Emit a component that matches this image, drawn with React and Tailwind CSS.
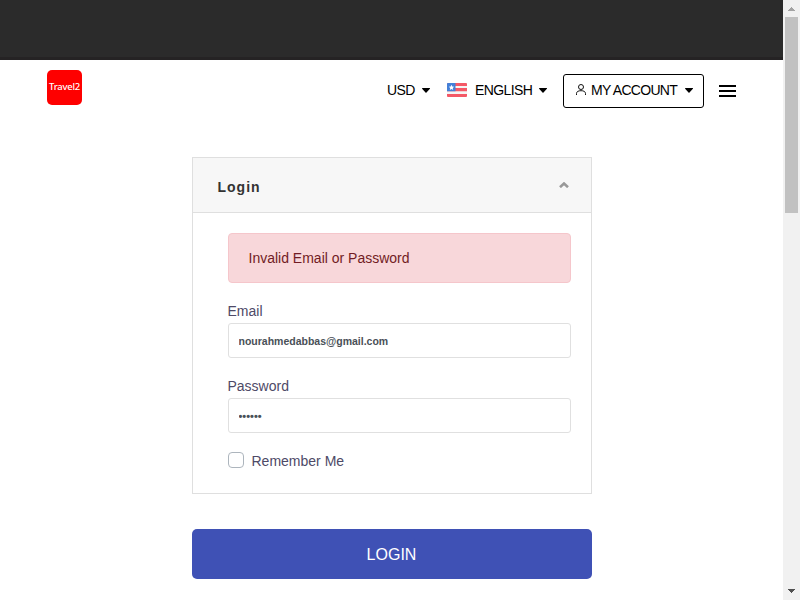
function Caret() {
  return (
    <svg className="block h-[5px] w-[8px] shrink-0" viewBox="0 0 8 5">
      <path d="M0 0.5C0 0.2 0.2 0 0.5 0h7c.5 0 .7.5.4.8L4.5 4.6a.7.7 0 0 1-1 0L.1.8z" fill="#000" />
    </svg>
  );
}

function Flag() {
  return (
    <svg className="-mt-[1px] block h-[14px] w-[20px] shrink-0" viewBox="0 0 20 14">
      <rect width="20" height="14" rx="1" fill="#f5f5f5" />
      <path d="M1 0h18a1 1 0 0 1 1 1v2H0V1a1 1 0 0 1 1-1zM0 5h20v3.200H0zM0 11h20v2a1 1 0 0 1-1 1H1a1 1 0 0 1-1-1z" fill="#f45866" />
      <path d="M1 0h7.500v8.300H0V1a1 1 0 0 1 1-1z" fill="#4480d8" />
      <path d="M4.500 1.800l.8 1.700 1.900.2-1.400 1.300.4 1.900-1.700-.9-1.700.9.400-1.900-1.400-1.300 1.900-.2z" fill="#fff" />
    </svg>
  );
}

function Header() {
  return (
    <header className="flex h-[61px] items-center pl-[47px] pr-[47px] text-[14px] tracking-[-0.6px] text-black">
      <div className="-mt-[6px] flex h-[35px] w-[35px] items-center justify-center rounded-[5px] bg-[#fe0000] font-['Noto_Sans',sans-serif] text-[9.5px] font-medium tracking-[-0.25px] text-white">
        Travel2
      </div>
      <div className="ml-auto flex items-center">
        <span className="w-[35px]">USD</span>
        <Caret />
        <div className="ml-[17px] flex items-center">
          <Flag />
          <span className="ml-[8px] w-[64px]">ENGLISH</span>
          <Caret />
        </div>
        <button className="ml-[16px] flex h-[34px] w-[141px] items-center rounded-[3px] border border-black pl-[12px]">
          <svg className="-mt-[3px] block h-[11px] w-[10px]" viewBox="0 0 10 11" fill="none" stroke="#111" strokeWidth="1">
            <circle cx="5" cy="3" r="2.500" />
            <path d="M.5 11V9.500C.5 7.500 2.500 6.700 5 6.700s4.500.8 4.500 2.800V11" />
          </svg>
          <span className="ml-[5px] w-[94px] text-left tracking-[-0.7px]">MY ACCOUNT</span>
          <Caret />
        </button>
        <div className="ml-[15px] flex w-[17px] flex-col gap-[3px]">
          <span className="h-[2px] bg-black" />
          <span className="h-[2px] bg-black" />
          <span className="h-[2px] bg-black" />
        </div>
      </div>
    </header>
  );
}

function Field({ label, type, value, size }) {
  return (
    <label className="block h-[75px]">
      <span className="-ml-[0.5px] block h-[20px] text-[14px] leading-[16px]">{label}</span>
      <input
        type={type}
        defaultValue={value}
        className={`block h-[35px] w-full rounded-[3px] border border-[#e0e0e0] bg-white pl-[9.5px] pr-[10px] font-bold text-[#495057] outline-none ${size}`}
      />
    </label>
  );
}

function LoginForm() {
  return (
    <form className="ml-[192px] mt-[36px] w-[400px]">
      <section className="h-[337px] border border-[#dfdfdf]">
        <div className="flex h-[55px] items-center border-b border-[#dfdfdf] bg-[#f7f7f7] pl-[24.5px] pr-[22px]">
          <h3 className="mt-[4px] text-[14px] font-bold tracking-[1px] text-[#333]">Login</h3>
          <svg className="ml-auto block h-[6px] w-[10px]" viewBox="0 0 10 6" fill="none" stroke="#999" strokeWidth="2.600">
            <path d="M1 5.200l4-3.700 4 3.700" />
          </svg>
        </div>
        <div className="pl-[35px] pr-[20px] pt-[20px] text-[#4e4a67]">
          <div className="mb-[20px] flex h-[50px] items-center rounded-[4px] border border-[#f5c6cb] bg-[#f8d7da] pl-[19.5px] text-[14px] text-[#721c24]">
            Invalid Email or Password
          </div>
          <Field label="Email" type="text" value="nourahmedabbas@gmail.com" size="text-[10.5px]" />
          <Field label="Password" type="password" value="123456" size="text-[11px]" />
          <label className="flex h-[16px] items-center text-[14px]">
            <span className="-mt-[2px] mr-[7.5px] h-[16px] w-[16px] rounded-[4px] border border-[#adb5bd] bg-white" />
            Remember Me
          </label>
        </div>
      </section>
      <button type="button" className="mt-[35px] block h-[50px] w-full rounded-[5px] bg-[#3f51b5] pr-[1px] pt-[2px] text-[16px] text-white">
        LOGIN
      </button>
    </form>
  );
}

function Scrollbar() {
  return (
    <aside className="flex w-[17px] shrink-0 flex-col items-center bg-[#f1f1f1]">
      <div className="flex h-[17px] items-center">
        <svg className="block h-[4px] w-[7px]" viewBox="0 0 7 4" shapeRendering="crispEdges">
          <path d="M3 0h1v1h1v1h1v1h1v1H0V3h1V2h1V1h1z" fill="#a3a3a3" />
        </svg>
      </div>
      <div className="h-[196px] w-[13px] bg-[#c1c1c1]" />
      <div className="mt-auto flex h-[18px] items-center">
        <svg className="block h-[4px] w-[7px]" viewBox="0 0 7 4" shapeRendering="crispEdges">
          <path d="M0 0h7v1H6v1H5v1H4v1H3V3H2V2H1V1H0z" fill="#505050" />
        </svg>
      </div>
    </aside>
  );
}

export default function App() {
  return (
    <div className="flex h-[600px] w-[800px] overflow-hidden bg-white font-['Liberation_Sans',Arial,sans-serif]">
      <main className="w-[783px] shrink-0">
        <div className="h-[60px] border-b-[3px] border-[#252324] bg-[#2b2b2b]" />
        <Header />
        <LoginForm />
      </main>
      <Scrollbar />
    </div>
  );
}
